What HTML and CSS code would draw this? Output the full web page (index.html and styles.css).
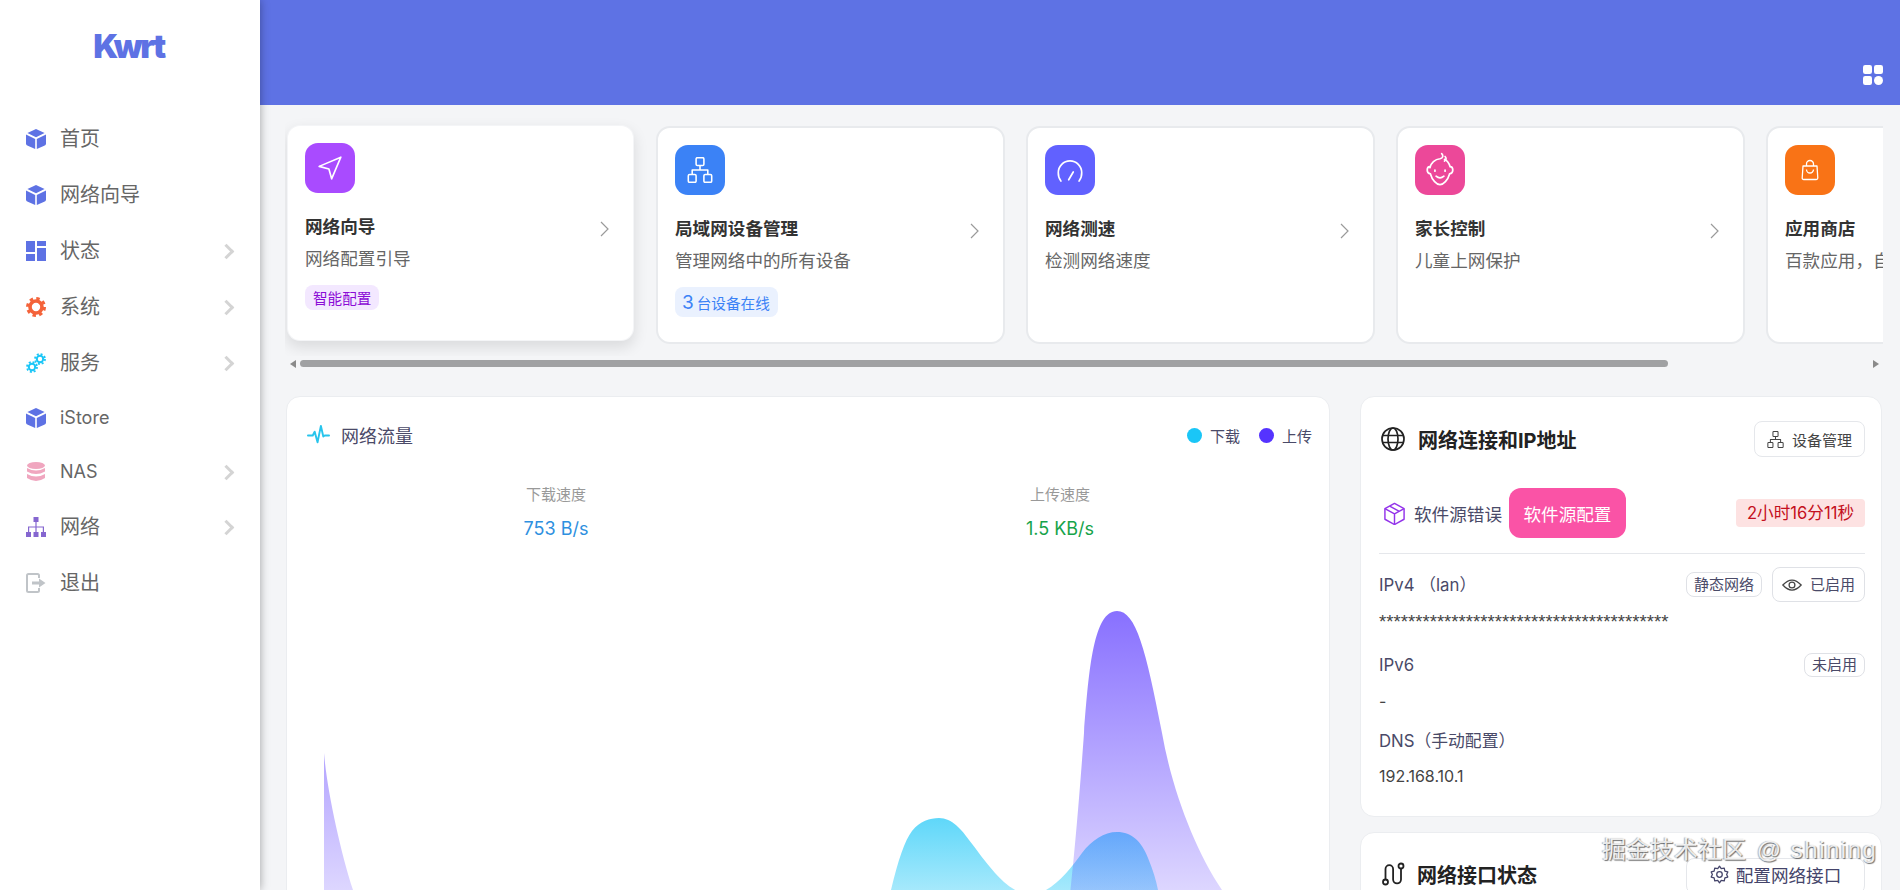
FILE: index.html
```html
<!DOCTYPE html>
<html lang="zh-CN">
<head>
    <meta charset="UTF-8">
    <meta name="viewport" content="width=device-width, initial-scale=1.0">
    <title>Kwrt</title>
    <link rel="stylesheet" href="styles.css">
</head>
<body>
<svg class="defs" width="0" height="0">
    <symbol id="cube" viewBox="0 0 20 20">
        <polygon points="10,0 18.6,4 10,8.2 1.4,4"/>
        <path d="M0 5.6 9.2 10v10l-7.4-3.2Q0 16 0 14.4z"/>
        <path d="M20 5.6 10.8 10v10l7.4-3.2q1.800-.8 1.800-2.400z"/>
    </symbol>
    <symbol id="chev" viewBox="0 0 9 16">
        <polyline points="1,1 8,8 1,15" fill="none" stroke="#9a9a9a" stroke-width="1.200"/>
    </symbol>
    <symbol id="net" viewBox="2 2 20 20">
        <g fill="none" stroke="currentColor" stroke-width="1.200" stroke-linejoin="round">
            <rect x="9" y="2.500" width="6" height="6" rx="1"/>
            <rect x="3" y="15.500" width="6" height="6" rx="1"/>
            <rect x="15" y="15.500" width="6" height="6" rx="1"/>
            <path d="M12 8.500V12M6 15.500V12H18V15.500"/>
        </g>
    </symbol>
</svg>

<aside class="sidebar">
    <div class="logo">Kwrt</div>
    <nav class="nav">
        <a class="nav-item"><svg class="nav-icon c-indigo"><use href="#cube"/></svg>首页</a>
        <a class="nav-item"><svg class="nav-icon c-indigo"><use href="#cube"/></svg>网络向导</a>
        <a class="nav-item has-sub">
            <svg class="nav-icon c-indigo" viewBox="0 0 20 20"><rect width="9" height="11"/><rect x="11" width="9" height="5"/><rect y="13" width="9" height="7"/><rect x="11" y="7" width="9" height="13"/></svg>状态</a>
        <a class="nav-item has-sub">
            <svg class="nav-icon" viewBox="0 0 20 20" fill="none" stroke="#f4633a"><circle cx="10" cy="10" r="6" stroke-width="3.600"/><circle cx="10" cy="10" r="8.500" stroke-width="3" stroke-dasharray="3.400 3.280"/></svg>系统</a>
        <a class="nav-item has-sub">
            <svg class="nav-icon" viewBox="0 0 20 20" fill="none" stroke="#1ac6f7"><circle cx="14" cy="6" r="3.200" stroke-width="2"/><circle cx="14" cy="6" r="5" stroke-width="1.800" stroke-dasharray="2 1.930"/><circle cx="6" cy="14" r="3.200" stroke-width="2"/><circle cx="6" cy="14" r="5" stroke-width="1.800" stroke-dasharray="2 1.930"/></svg>服务</a>
        <a class="nav-item latin"><svg class="nav-icon c-indigo"><use href="#cube"/></svg>iStore</a>
        <a class="nav-item latin has-sub">
            <svg class="nav-icon" viewBox="0 0 20 20" fill="#f0a6bf"><ellipse cx="10" cy="3.500" rx="9" ry="3.500"/><path d="M1 6q9 5 18 0v3.500q-9 5-18 0z"/><path d="M1 12q9 5 18 0v4q-9 6-18 0z"/></svg>NAS</a>
        <a class="nav-item has-sub">
            <svg class="nav-icon" viewBox="0 0 20 20" fill="#8566d0"><rect x="7.500" y="0" width="5" height="5"/><rect y="15" width="5" height="5"/><rect x="7.500" y="15" width="5" height="5"/><rect x="15" y="15" width="5" height="5"/><path d="M9.400 5h1.200v4.400H18V15h-1.200v-4.400h-6.200V15H9.400v-4.400H3.200V15H2V9.400h7.400z"/></svg>网络</a>
        <a class="nav-item">
            <svg class="nav-icon" viewBox="0 0 20 20" fill="none" stroke="#c0c4c8" stroke-width="2"><path d="M13 5V2.500Q13 1 11.500 1H2.500Q1 1 1 2.500v15Q1 19 2.500 19h9q1.500 0 1.500-1.500V15"/><path d="M6 8.500h7V5.500l6.500 4.500-6.500 4.500v-3H6z" fill="#c0c4c8" stroke="none"/></svg>退出</a>
    </nav>
</aside>

<main class="main">
    <header class="topbar">
        <svg class="apps" viewBox="0 0 20 20" fill="#fff"><rect width="9" height="9" rx="2.200"/><rect x="11" width="9" height="9" rx="2.200"/><rect y="11" width="9" height="9" rx="2.200"/><circle cx="15.500" cy="15.500" r="4.500"/></svg>
    </header>

    <section class="cards-wrap">
        <div class="cards">
            <article class="quick is-hover">
                <div class="quick-icon bg-purple">
                    <svg viewBox="0 0 24 24" fill="none" stroke="#fff" stroke-width="1.500" stroke-linejoin="round"><polygon points="2,10.500 22,2 13.500,22 11,13"/></svg>
                </div>
                <div class="quick-title">网络向导<svg class="quick-chev"><use href="#chev"/></svg></div>
                <p class="quick-sub">网络配置引导</p>
                <span class="tag tag-purple">智能配置</span>
            </article>
            <article class="quick">
                <div class="quick-icon bg-blue"><svg class="c-white"><use href="#net"/></svg></div>
                <div class="quick-title">局域网设备管理<svg class="quick-chev"><use href="#chev"/></svg></div>
                <p class="quick-sub">管理网络中的所有设备</p>
                <span class="tag tag-blue"><b>3</b> 台设备在线</span>
            </article>
            <article class="quick">
                <div class="quick-icon bg-indigo">
                    <svg viewBox="2 3 20 18" fill="none" stroke="#fff" stroke-width="1.300" stroke-linecap="round"><path d="M5 20.500A10 10 0 0 1 3 14 9 9 0 0 1 21 14a10 10 0 0 1-2 6.500"/><path d="M11 19.500l3.500-6"/></svg>
                </div>
                <div class="quick-title">网络测速<svg class="quick-chev"><use href="#chev"/></svg></div>
                <p class="quick-sub">检测网络速度</p>
            </article>
            <article class="quick">
                <div class="quick-icon bg-pink">
                    <svg class="baby" viewBox="0 0 30 32" fill="none" stroke="#fff" stroke-width="1.500" stroke-linecap="round"><path d="M6 14a10 10 0 0 1 9-8c3-.5 3-3 1.500-4.500M19 8c2-1 1.500-3 .5-4"/><path d="M6 13c-3 0-3.500 6 .5 6.500C8 25 12 29 15 29s7-4 8.500-9.500c4-.5 3.500-6.500.5-6.500-1-3-3-5.500-5-6.500"/><path d="M10.500 16v1M19.500 16v1M11.500 21.500q3.500 3 7 0"/></svg>
                </div>
                <div class="quick-title">家长控制<svg class="quick-chev"><use href="#chev"/></svg></div>
                <p class="quick-sub">儿童上网保护</p>
            </article>
            <article class="quick">
                <div class="quick-icon bg-orange">
                    <svg class="bag" viewBox="0 0 24 24" fill="none" stroke="#fff" stroke-width="1.300" stroke-linejoin="round"><path d="M5 8h14l.8 12q0 1.500-1.500 1.500H5.700q-1.500 0-1.500-1.500z"/><path d="M8.500 8V6a3.500 3.500 0 0 1 7 0v2M8.500 11.500a3.500 3.500 0 0 0 7 0"/></svg>
                </div>
                <div class="quick-title">应用商店<svg class="quick-chev"><use href="#chev"/></svg></div>
                <p class="quick-sub">百款应用，自由选择</p>
            </article>
        </div>
    </section>

    <div class="scroller">
        <span class="arrow arrow-left"></span>
        <div class="track"><div class="thumb"></div></div>
        <span class="arrow arrow-right"></span>
    </div>

    <section class="dash">
        <div class="panel traffic">
            <div class="traffic-head">
                <div class="traffic-title">
                    <svg viewBox="0 0 24 24" fill="none" stroke="#27c4ec" stroke-width="2" stroke-linecap="round" stroke-linejoin="round"><path d="M1 12h5l2-4 3 11 3.500-17 2.500 11 1.500-1H23"/></svg>
                    网络流量
                </div>
                <div class="legend">
                    <span class="legend-item"><i class="dot dot-down"></i>下载</span>
                    <span class="legend-item"><i class="dot dot-up"></i>上传</span>
                </div>
            </div>
            <div class="speeds">
                <div class="speed"><div class="speed-label">下载速度</div><div class="speed-val val-down">753 B/s</div></div>
                <div class="speed"><div class="speed-label">上传速度</div><div class="speed-val val-up">1.5 KB/s</div></div>
            </div>
            <svg class="chart" viewBox="304 560 1008 340">
                <defs>
                    <linearGradient id="fillUp" gradientUnits="userSpaceOnUse" x1="0" y1="611" x2="0" y2="890">
                        <stop offset="0" stop-color="#5533ff" stop-opacity=".7"/>
                        <stop offset="1" stop-color="#5533ff" stop-opacity=".2"/>
                    </linearGradient>
                    <linearGradient id="fillDown" gradientUnits="userSpaceOnUse" x1="0" y1="818" x2="0" y2="890">
                        <stop offset="0" stop-color="#1ac6f7" stop-opacity=".7"/>
                        <stop offset="1" stop-color="#1ac6f7" stop-opacity=".39"/>
                    </linearGradient>
                </defs>
                <path fill="url(#fillDown)" d="M880 940 891 890C898 860 905 840 912 831C920 821 930 818 939 818C952 818 962 830 969 840C977 850 985 862 995 873C1003 882 1012 890 1028 896C1036 896 1042 893 1046 890C1060 882 1072 867 1082 853C1092 840 1104 832 1117 832C1132 832 1142 842 1148 858C1153 870 1156 880 1158 890L1165 940Z"/>
                <path fill="url(#fillUp)" d="M324 753C327 790 340 850 353 890L372 940H324ZM1064 940C1072 890 1080 790 1084 733C1089 667 1094 611 1117 611C1136 611 1146 650 1162 733C1172 790 1195 850 1222 890L1250 940Z"/>
            </svg>
        </div>

        <div class="side">
            <div class="panel info">
                <div class="info-head">
                    <div class="info-title">
                        <svg viewBox="0 0 24 24" fill="none" stroke="#222" stroke-width="1.700"><circle cx="12" cy="12" r="11"/><ellipse cx="12" cy="12" rx="5" ry="11"/><path d="M1.500 8.500h21M1.500 15.500h21"/></svg>
                        网络连接和IP地址
                    </div>
                    <a class="btn btn-devices"><svg class="btn-net"><use href="#net"/></svg>设备管理</a>
                </div>
                <div class="feed">
                    <svg class="feed-icon" viewBox="0 0 24 24" fill="none" stroke="#9333ea" stroke-width="1.500" stroke-linejoin="round"><path d="M12 1.500 22 7v11l-10 5.500L2 18V7z"/><path d="M2 7l10 5.500L22 7M12 12.500v11M7 4.300l10 5.500"/></svg>
                    <span class="feed-text">软件源错误</span>
                    <a class="btn-pink">软件源配置</a>
                    <span class="uptime">2小时16分11秒</span>
                </div>
                <div class="row row-ipv4">
                    <span>IPv4 （lan）</span>
                    <span class="row-right">
                        <span class="chip chip-ipv4">静态网络</span>
                        <a class="btn btn-eye"><svg viewBox="0 0 24 16" fill="none" stroke="#444" stroke-width="1.500"><path d="M1 8q11-12 22 0-11 12-22 0z"/><circle cx="12" cy="8" r="3.500"/></svg>已启用</a>
                    </span>
                </div>
                <div class="val val-stars">****************************************</div>
                <div class="row row-ipv6">
                    <span>IPv6</span>
                    <span class="chip">未启用</span>
                </div>
                <div class="val val-dash">-</div>
                <div class="row row-dns"><span>DNS（手动配置）</span></div>
                <div class="val val-ip">192.168.10.1</div>
            </div>

            <div class="panel iface">
                <div class="iface-head">
                    <div class="info-title iface-title">
                        <svg viewBox="0 0 24 24" fill="none" stroke="#222" stroke-width="1.800"><circle cx="4.500" cy="20" r="2.500"/><circle cx="20" cy="4" r="2.500"/><path d="M4.500 17.500V7a3.800 3.800 0 0 1 7.600 0v10.500a3.900 3.900 0 0 0 7.900 0V6.500"/></svg>
                        网络接口状态
                    </div>
                    <a class="btn btn-iface">
                        <svg viewBox="0 0 24 24" fill="none" stroke="#44446a" stroke-width="1.600" stroke-linejoin="round"><circle cx="12" cy="12" r="3.500"/><path d="M12 1.500l2.200 3.200 3.800-.8.800 3.800 3.700 1.100-1.500 3.200 1.500 3.200-3.700 1.100-.8 3.800-3.800-.8L12 22.500l-2.200-3.200-3.800.8-.8-3.800-3.700-1.100L3 12 1.500 8.800l3.700-1.100.8-3.800 3.800.8z"/></svg>
                        配置网络接口
                    </a>
                </div>
            </div>
        </div>
    </section>
</main>

<div class="watermark">掘金技术社区 <span class="watermark-name">@ shining</span></div>
</body>
</html>
```

FILE: styles.css
```css
* {
    box-sizing: border-box;
}
html, body {
    height: 100%;
}
body {
    margin: 0;
    display: flex;
    overflow: hidden;
    background: #f4f5f7;
    color: #4a4a68;
    font-family: Inter, "Noto Sans CJK SC", sans-serif;
}
.defs {
    position: absolute;
}
a {
    text-decoration: none;
}
p {
    margin: 0;
}
.c-indigo {
    fill: #5e72e4;
}
.c-white {
    color: #fff;
}

/* sidebar */
.sidebar {
    position: relative;
    z-index: 2;
    flex: 0 0 260px;
    background: #fff;
    box-shadow: 0 0 9px rgba(0, 0, 0, .35);
}
.logo {
    height: 92px;
    padding-right: 3px;
    display: flex;
    align-items: center;
    justify-content: center;
    color: #5e72e4;
    font-size: 33px;
    font-weight: 900;
    letter-spacing: -2.400px;
}
.nav {
    margin-top: 19px;
}
.nav-item {
    height: 56px;
    display: flex;
    align-items: center;
    padding-left: 26px;
    color: #666;
    font-size: 20px;
    line-height: 24px;
}
.nav-item.latin {
    height: 54px;
    font-size: 18px;
}
.nav-icon {
    width: 20px;
    height: 20px;
    margin-right: 14px;
    flex: none;
}
.has-sub::after {
    content: "";
    width: 8px;
    height: 8px;
    margin-left: auto;
    margin-right: 28px;
    border-top: 3px solid #d4d4d4;
    border-right: 3px solid #d4d4d4;
    transform: rotate(45deg);
}

/* main column */
.main {
    flex: 1;
    min-width: 0;
    height: 100vh;
    overflow: hidden;
}
.topbar {
    height: 105px;
    background: #5e72e4;
    display: flex;
    justify-content: flex-end;
    align-items: flex-end;
    padding: 0 17px 20px 0;
}
.apps {
    width: 20px;
    height: 20px;
}

/* quick cards */
.cards-wrap {
    margin: 0 17px 0 25px;
    padding: 21px 0 12px 1px;
    overflow: hidden;
}
.cards {
    display: flex;
    gap: 21px;
}
.quick {
    flex: 0 0 349px;
    height: 218px;
    padding: 17px 24px 0 17px;
    background: #fff;
    border: 2px solid #e8eaed;
    border-radius: 14px;
}
.quick.is-hover {
    border-color: transparent;
    background-clip: padding-box;
    transform: translateY(-2px);
    box-shadow: 0 6px 14px rgba(0, 0, 0, .1);
}
.quick-icon {
    width: 50px;
    height: 50px;
    border-radius: 13px;
    display: flex;
    align-items: center;
    justify-content: center;
}
.quick-icon svg {
    width: 26px;
    height: 26px;
}
.quick-icon .baby {
    width: 34px;
    height: 36px;
}
.quick-icon .bag {
    width: 24px;
    height: 24px;
}
.bg-purple { background: #a94bff; }
.bg-blue { background: #3b82f6; }
.bg-indigo { background: #6161ff; }
.bg-pink { background: #ec4899; }
.bg-orange { background: #f97316; }
.quick-title {
    display: flex;
    align-items: center;
    justify-content: space-between;
    height: 24px;
    margin-top: 20px;
    color: #333;
    font-size: 17.6px;
    font-weight: 700;
    white-space: nowrap;
}
.quick-chev {
    width: 9px;
    height: 16px;
    margin-top: 7px;
}
.quick-sub {
    margin-top: 10px;
    height: 24px;
    line-height: 24px;
    color: #666;
    font-size: 17.6px;
    white-space: nowrap;
}
.tag {
    display: inline-flex;
    align-items: center;
    margin-top: 14px;
    padding: 0 8px;
    height: 25px;
    border-radius: 8px;
    font-size: 14.6px;
}
.tag-purple {
    background: #f3e8ff;
    color: #8b0bd6;
}
.tag-blue {
    height: 30px;
    padding: 0 8px 0 7px;
    background: #eaf1fe;
    color: #3b82f6;
}
.tag-blue b {
    font-size: 19px;
    font-weight: 400;
    margin-right: 3px;
}

/* fake horizontal scrollbar of the card row */
.scroller {
    display: flex;
    align-items: center;
    height: 15px;
    margin: 0 17px 0 25px;
}
.arrow {
    flex: 0 0 15px;
    display: flex;
    justify-content: center;
}
.arrow::before {
    content: "";
    border-top: 4px solid transparent;
    border-bottom: 4px solid transparent;
}
.arrow-left::before {
    border-right: 6px solid #8a8a8a;
}
.arrow-right::before {
    border-left: 6px solid #8a8a8a;
}
.track {
    flex: 1;
}
.thumb {
    width: 1368px;
    height: 7px;
    border-radius: 4px;
    background: #a0a1a3;
}

/* lower panels */
.dash {
    display: grid;
    grid-template-columns: 1fr 522px;
    gap: 30px;
    margin: 25px 18px 0 26px;
}
.panel {
    background: #fff;
    border: 1px solid #ebedf0;
    border-radius: 14px;
}
.traffic {
    height: 600px;
    padding: 26px 17px 0;
}
.traffic-head {
    display: flex;
    justify-content: space-between;
    align-items: center;
    height: 24px;
}
.traffic-title {
    display: flex;
    align-items: center;
    gap: 11px;
    font-size: 18px;
    color: #4a4a68;
}
.traffic-title svg {
    width: 23px;
    height: 23px;
    margin-left: 3px;
}
.legend {
    display: flex;
    gap: 19px;
    font-size: 15px;
}
.legend-item {
    display: flex;
    align-items: center;
    gap: 8px;
}
.dot {
    width: 15px;
    height: 15px;
    border-radius: 50%;
}
.dot-down { background: #1ac6f7; }
.dot-up { background: #5533ff; }
.speeds {
    display: grid;
    grid-template-columns: 1fr 1fr;
    margin-top: 38px;
    text-align: center;
}
.speed-label {
    height: 20px;
    line-height: 20px;
    color: #999;
    font-size: 15px;
}
.speed-val {
    height: 20px;
    line-height: 20px;
    margin-top: 14px;
    font-size: 18px;
}
.val-down { color: #2e90e0; }
.val-up { color: #16a34a; }
.chart {
    display: block;
    width: 1008px;
    height: 340px;
    margin-top: 21px;
}

/* right column */
.side {
    display: flex;
    flex-direction: column;
    gap: 15px;
}
.info {
    height: 421px;
    padding: 24px 16px 0 18px;
}
.info-head, .iface-head {
    display: flex;
    justify-content: space-between;
}
.info-head {
    align-items: center;
    margin-bottom: 31px;
}
.info-title {
    display: flex;
    align-items: center;
    gap: 13px;
    color: #222;
    font-size: 20px;
    font-weight: 700;
}
.info-title svg {
    width: 24px;
    height: 24px;
    margin-left: 2px;
}
.btn {
    display: inline-flex;
    align-items: center;
    justify-content: center;
    height: 36px;
    padding: 0 14px;
    gap: 8px;
    border: 1px solid #e5e7eb;
    border-radius: 8px;
    color: #444;
    font-size: 15px;
    white-space: nowrap;
}
.btn-devices {
    width: 111px;
    padding: 0;
}
.btn-net {
    width: 17px;
    height: 17px;
    color: #444;
}
.feed {
    display: flex;
    align-items: center;
    padding-bottom: 15px;
    border-bottom: 1px solid #e5e7eb;
}
.feed-icon {
    width: 23px;
    height: 23px;
    margin: 0 8px 0 4px;
}
.feed-text {
    font-size: 17.6px;
}
.btn-pink {
    display: flex;
    align-items: center;
    justify-content: center;
    width: 117px;
    height: 50px;
    margin-left: 7px;
    border-radius: 12px;
    background: #fa53a6;
    color: #fff;
    font-size: 17.6px;
}
.uptime {
    margin-left: auto;
    height: 28px;
    line-height: 28px;
    padding: 0 2px;
    width: 129px;
    text-align: center;
    border-radius: 4px;
    background: #fde2e2;
    color: #c41020;
    font-size: 16.6px;
    white-space: nowrap;
}
.row {
    display: flex;
    align-items: center;
    justify-content: space-between;
    font-size: 16.8px;
    line-height: 20px;
}
.row-ipv4 {
    margin-top: 13px;
}
.row-right {
    display: flex;
    align-items: center;
    gap: 10px;
}
.chip {
    display: inline-flex;
    align-items: center;
    justify-content: center;
    height: 24px;
    padding: 0 7px;
    border: 1px solid #dfe1e6;
    border-radius: 8px;
    color: #4a4a68;
    font-size: 15px;
}
.chip-ipv4 {
    height: 25px;
}
.btn-eye {
    height: 35px;
    width: 93px;
    padding: 0;
    border-color: #dfe1e6;
    color: #4a4a68;
}
.btn-eye svg {
    width: 20px;
    height: 14px;
}
.val {
    height: 20px;
    line-height: 20px;
    color: #444;
    font-size: 16px;
}
.val-stars {
    margin-top: 10px;
    font-family: "Liberation Sans", sans-serif;
    font-size: 18.6px;
}
.row-ipv6 {
    margin-top: 21px;
}
.val-dash {
    margin-top: 14px;
}
.row-dns {
    margin-top: 20px;
}
.val-ip {
    margin-top: 15px;
}
.iface {
    height: 120px;
    padding: 25px 16px 0 18px;
}
.iface-head {
    align-items: flex-start;
}
.iface-title {
    height: 32px;
    gap: 12px;
}
.btn-iface {
    width: 179px;
    height: 36px;
    padding: 0 0 4px;
    gap: 7px;
    color: #44446a;
    font-size: 17.6px;
}
.btn-iface svg {
    width: 19px;
    height: 19px;
}

/* image watermark sits over the page */
.watermark {
    position: absolute;
    left: 1602px;
    top: 834px;
    z-index: 3;
    color: rgba(255, 255, 255, .85);
    font-size: 24px;
    line-height: 32px;
    white-space: nowrap;
    text-shadow: 1px 1px 1px rgba(0, 0, 0, .55), -1px 0 1px rgba(0, 0, 0, .3);
}
.watermark-name {
    margin-left: 4px;
    font-family: "Liberation Sans", sans-serif;
    letter-spacing: 1.500px;
}
```
